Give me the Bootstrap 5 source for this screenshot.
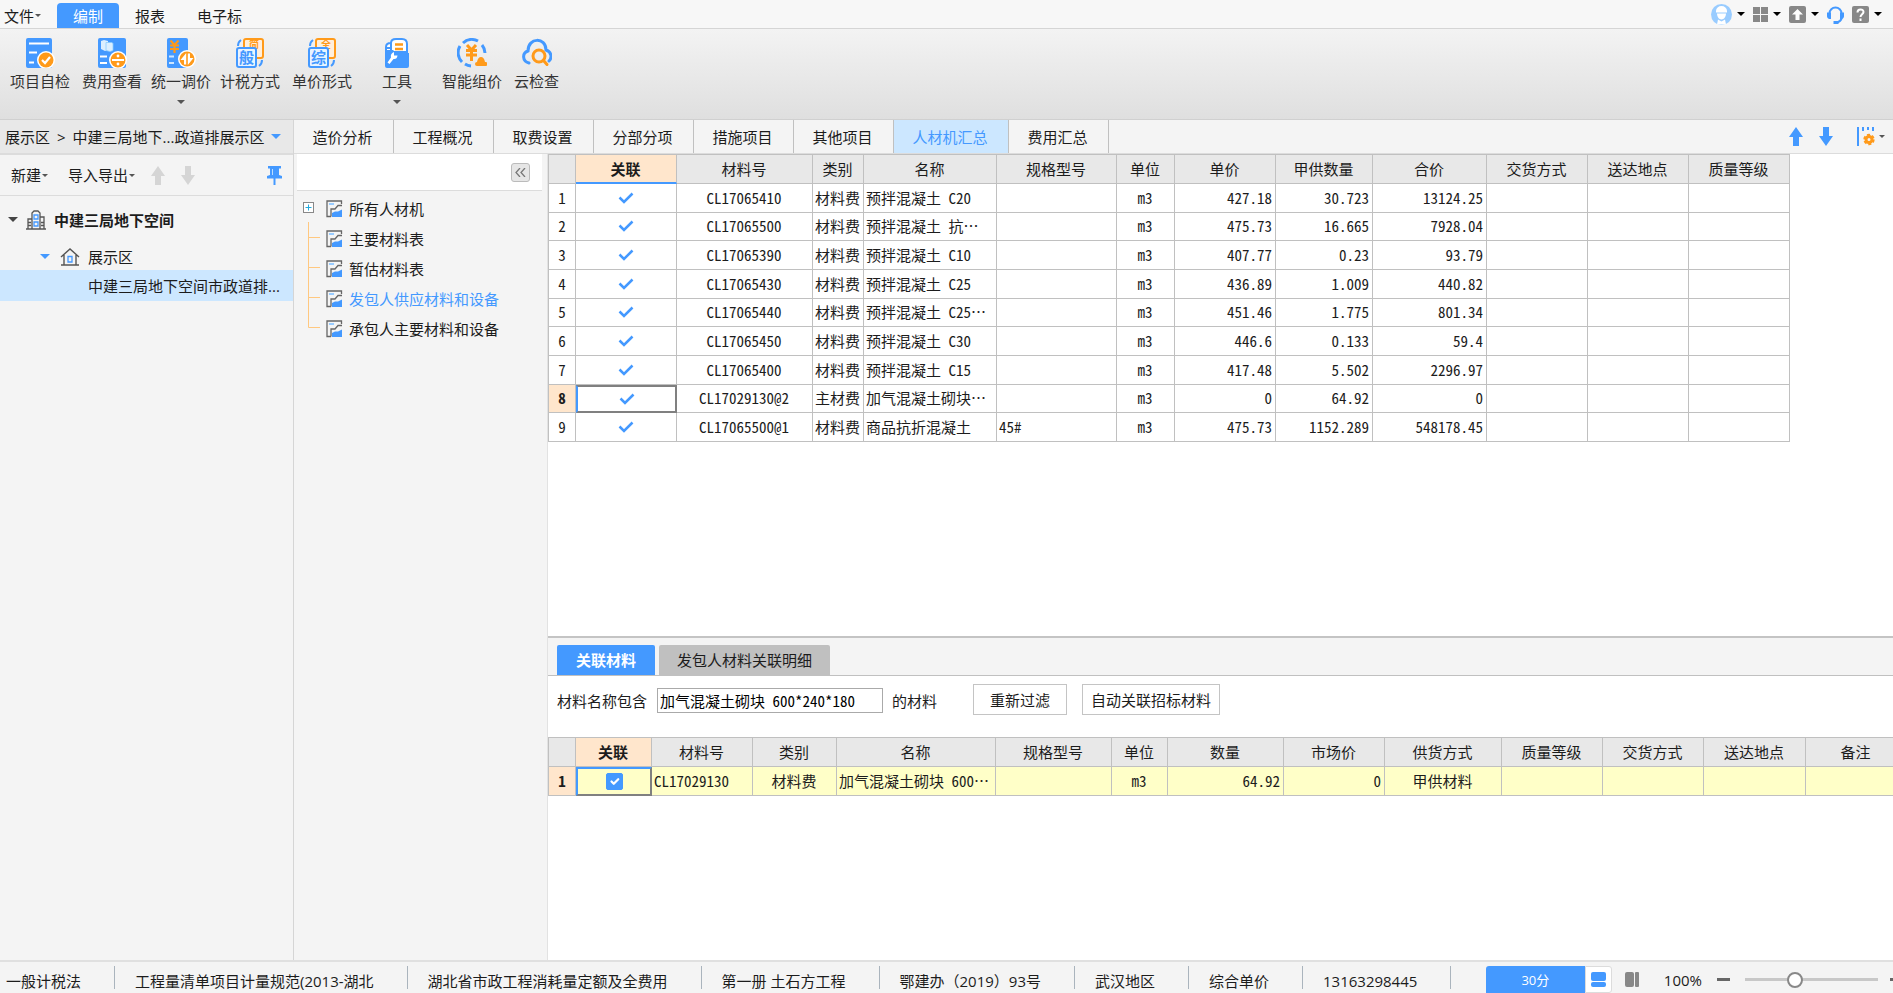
<!DOCTYPE html>
<html lang="zh-CN">
<head>
<meta charset="utf-8">
<meta name="viewport" content="width=device-width, initial-scale=1">
<title>人材机汇总</title>
<link href="https://cdn.jsdelivr.net/npm/bootstrap@5.3.0/dist/css/bootstrap.min.css" rel="stylesheet">
<style>
:root{--blue:#4499ff;--orange:#ff9a1a;--line:#c0c0c0;--soft:#dcdcdc;--pane:#f4f4f4}
body{font-family:"Open Sans","Noto Sans CJK SC",sans-serif;font-size:15px;line-height:20px;color:#1c1c1c;background:#fff}
svg{flex:none;display:block}
button,.plain{border:0;background:none;padding:0;color:inherit;text-decoration:none;white-space:nowrap}
.caret{width:0;height:0;border:4px solid transparent;border-top-color:currentColor;border-bottom:0;flex:none}
.caret-lg{border-width:5px;border-bottom:0}
.caret-sm{border-width:3px;border-bottom:0;color:#555;margin-left:1px}
.topbar{height:29px;background:#f7f7f7;border-bottom:1px solid #d5d5d5}
.menu-item{height:25px;padding:0 14px;line-height:24px}
.menu-item.active{background:var(--blue);color:#fff;border-radius:4px 4px 0 0;padding:0 16px}
.quick{gap:8px;padding-right:11px;color:#000}
.quick > span{display:flex;align-items:center;gap:5px}
.ribbon{height:91px;background:linear-gradient(#f3f3f3,#dfdfdf);padding:9px 10px 0;border-bottom:1px solid #d0d0d0;gap:9px}
.tool{display:flex;flex-direction:column;align-items:center;color:#333}
.tool + .tool-apart{margin-left:3px}
.tool + .tool-group{margin-left:21px}
.tool span{margin-top:2px;line-height:22px}
.tool .caret{margin-top:8px;color:#555}
.side{width:294px;background:var(--pane);border-right:1px solid #d5d5d5}
.crumb{height:35px;background:#e8e8e8;border-bottom:2px solid var(--soft);padding:0 12px 0 5px}
.crumb i + i,.crumb b{font-weight:400;margin:0 7px}
.side-tools{height:41px;border-bottom:1px solid var(--soft);padding:0 11px}
.node{height:31px;white-space:nowrap}
.node.picked{background:#cce7ff;padding-left:88px}
.views{height:34px;background:var(--pane);border-bottom:1px solid var(--soft)}
.view{height:33px;padding:1px 20px 0 18px;width:100px;border-right:1px solid var(--line)}
.view.active{width:115px;background:#cce7ff;color:var(--blue)}
.middle{width:254px;background:var(--pane);border-right:1px solid #e2e2e2}
.middle-head{height:37px;margin:0 5px 0 3px;background:#fff;border-bottom:1px solid var(--soft);padding:0 12px}
.fold{width:19px;height:19px;border:1px solid #bbb;border-radius:3px;background:#e6e6e6;display:grid;place-items:center}
.tree{list-style:none;margin:0;padding:3px 0 0 9px}
.tree li{height:30px;display:flex;align-items:center;gap:6px}
.branch{width:17px;height:30px}
.grid{table-layout:fixed;border-collapse:separate;border-spacing:0;border:solid var(--line);border-width:1px 0 0 1px;font-family:"Noto Sans Mono CJK SC","Noto Sans CJK SC",monospace;white-space:nowrap}
.grid th,.grid td{border:solid var(--line);border-width:0 1px 1px 0;padding:0 3px 0 2px;overflow:hidden;text-align:center;line-height:20px}
.grid th{font-weight:400;background:#e8e8e8;height:29px}
.grid tbody th{background:#fff;padding:0;height:auto}
.grid .hot,.grid tbody th.hot{background:#ffe6cc;font-weight:700}
.grid .l{text-align:left}.grid .r{text-align:right}
.grid svg{margin:auto}
.grid-main{width:1242px;height:288px}
.grid-main thead .hot{border-bottom:2px solid var(--blue)}
.grid td.focus-cell{border:2px solid #808080;border-left-color:var(--blue);padding:0}
.grid-sub{width:1359px;height:59px}
.grid-sub td{background:#ffffc8}
.grid-sub td.focus-cell{border-top-color:var(--blue)}
.grid .form-check-input{width:17px;height:17px;float:none;border-radius:2px;display:block;margin:auto}
.form-check-input:checked{background-color:var(--blue);border-color:var(--blue)}
.lower{flex:0 0 324px;border-top:2px solid #c4c4c4}
.lower-tabs{height:38px;background:var(--pane);border-bottom:1px solid var(--line);padding:0 9px}
.lower-tab{height:30px;padding:0 18px;background:#c0c0c0;border-radius:2px 2px 0 0}
.lower-tab.active{background:var(--blue);color:#fff;font-weight:600;padding:0 19px}
.filter{height:61px;padding:8px 9px 0}
.filter input{width:226px;height:25px;border:1px solid #aaa;padding:0 2px;margin:0 9px 0 10px;font-family:"Noto Sans Mono CJK SC","Noto Sans CJK SC",monospace}
.filter .act{height:31px;border:1px solid #c4c4c4;background:#fff;padding:0 8px}
.filter .act-wide{padding:0 16px;margin:0 15px 0 36px}
.status{height:33px;background:var(--pane);border-top:2px solid #e0e0e0;white-space:nowrap;overflow:hidden}
.cell{height:23px;padding:0 33px 0 20px;border-right:1px solid #aab4bd}
.cell:first-child{padding-left:6px}
.score{width:99px;height:28px;background:var(--blue);color:#fff;border-radius:3px 0 0 0;font-size:13px}
.layout-btn{width:27px;height:27px;border:1px solid var(--soft);background:#fff;border-radius:0 3px 3px 0;display:grid;place-items:center}
.zoomer{appearance:none;width:133px;height:18px;margin:0 12px 0 0;background:linear-gradient(#c8c8c8,#c8c8c8) center/100% 3px no-repeat}
.zoomer::-webkit-slider-thumb{appearance:none;width:16px;height:16px;border-radius:50%;border:2px solid #888;background:#fff}
.minus{margin:0 15px}
.cols-icon{margin-right:20px}
</style>
</head>
<body class="vh-100 d-flex flex-column overflow-hidden">
<svg width="0" height="0" class="position-absolute" aria-hidden="true">
  <symbol id="tick" viewBox="0 0 16 12"><path d="M1.500 5.500 6 10 14.500 1.500" fill="none" stroke="#49f" stroke-width="2.500"/></symbol>
  <symbol id="up" viewBox="0 0 14 19"><path d="M7 0 14 10H10V19H4V10H0Z" fill="currentColor"/></symbol>
  <symbol id="down" viewBox="0 0 14 19"><path d="M7 19 14 9H10V0H4V9H0Z" fill="currentColor"/></symbol>
  <symbol id="sheet" viewBox="0 0 17 18"><path d="M15.500 4V1H1V16.500H5M5 16.500V9H9L12 5.500H16" fill="none" stroke="#666" stroke-width="1.300"/><path d="M3 4H8" stroke="#9cf" stroke-width="2"/><path d="M6 17V13L9 11.500H12L16 9.500V17Z" fill="#49f"/></symbol>
</svg>

<nav class="topbar d-flex align-items-end justify-content-between">
  <div class="d-flex">
    <button class="menu-item px-0 ms-1 d-flex align-items-center">文件<i class="caret caret-sm"></i></button>
    <button class="menu-item active ms-3">编制</button>
    <button class="menu-item ps-3">报表</button>
    <button class="menu-item ms-1">电子标</button>
  </div>
  <div class="quick d-flex align-items-center align-self-center">
    <span><svg width="21" height="21" viewBox="0 0 21 21"><circle cx="10.500" cy="10.500" r="10.500" fill="#9cf"/><path d="M5 7a5.500 5 0 0 1 11 0v1.500H5ZM6 9.500h9c0 3-2 6-4.500 6S6 12.500 6 9.500M7 15.500l3.500 2 3.500-2 1 5h-9Z" fill="#fff"/></svg><i class="caret"></i></span>
    <span><svg width="15" height="15" viewBox="0 0 15 15"><path d="M0 0h7v7H0ZM8 0h7v7H8ZM0 8h7v7H0ZM8 8h7v7H8Z" fill="#888"/></svg><i class="caret"></i></span>
    <span><svg width="17" height="17" viewBox="0 0 17 17"><rect width="17" height="17" rx="2" fill="#888"/><path d="M8.500 3 14 8.500H10.500V14H6.500V8.500H3Z" fill="#fff"/></svg><i class="caret"></i></span>
    <svg width="17" height="19" viewBox="0 0 17 19"><path d="M2.500 8.500a6 6 0 0 1 12 0M15 12q-1 5-6 5.500" fill="none" stroke="#49f" stroke-width="2"/><path d="M0 7.500h4V14H2a3 3 0 0 1-2-3ZM17 7.500h-4V14h2a3 3 0 0 0 2-3ZM6.500 16h5v3h-5Z" fill="#49f"/></svg>
    <span><svg width="17" height="17" viewBox="0 0 17 17"><rect width="17" height="17" rx="2" fill="#888"/><path d="M5.500 6.500C5.500 2.500 11.500 2.500 11.500 6c0 2-3 2.500-3 5M8.500 12.500V15" fill="none" stroke="#fff" stroke-width="2"/></svg><i class="caret"></i></span>
  </div>
</nav>

<header class="ribbon d-flex align-items-start">
  <button class="tool"><svg width="30" height="30" viewBox="0 0 30 30"><rect x="1" width="26" height="30" rx="2" fill="#49f"/><path d="M4 5.500H24M4 14.500H12M4 24.500H9" stroke="#fff" stroke-width="2"/><circle cx="21" cy="22" r="9" fill="#fff"/><circle cx="21" cy="22" r="7.500" fill="#ff9a1a"/><path d="M17 22 20 25 25 19" fill="none" stroke="#fff" stroke-width="2.200"/></svg><span>项目自检</span></button>
  <button class="tool tool-apart"><svg width="30" height="30" viewBox="0 0 30 30"><rect x="1" width="28" height="30" rx="2" fill="#49f"/><path d="M4 3 7 2l4 1v9l-3 1-4-2Z" fill="#dcefff"/><path d="M9 4.500h6l1 1v7l-3 1-4-1Z" fill="#dcefff" stroke="#8cf" stroke-width=".8"/><path d="M3 18.500H10M3 25H10" stroke="#fff" stroke-width="2"/><circle cx="21" cy="22" r="9" fill="#fff"/><circle cx="21" cy="22" r="7.500" fill="#ff9a1a"/><path d="M15 22H27" stroke="#fff" stroke-width="2"/><circle cx="21" cy="18" r="1.400" fill="#fff"/><circle cx="21" cy="26" r="1.400" fill="#fff"/></svg><span>费用查看</span></button>
  <button class="tool"><svg width="30" height="30" viewBox="0 0 30 30"><rect x="1" width="21" height="30" rx="2" fill="#49f"/><path d="M4.500 2.500 8.500 7 12.500 2.500M4 7.500H13M4 11H13M8.500 7V15" fill="none" stroke="#ff9a1a" stroke-width="2.200"/><path d="M3 18.500H8M3 25H8" stroke="#cde6ff" stroke-width="2"/><circle cx="21" cy="21" r="9" fill="#fff"/><circle cx="21" cy="21" r="7.500" fill="#ff9a1a"/><path d="M20.200 15V26.500H18V22H14.500ZM21.800 27V15.500H24V20H27.500Z" fill="#fff"/></svg><span>统一调价</span><i class="caret"></i></button>
  <button class="tool"><svg width="30" height="30" viewBox="0 0 30 30"><rect x="9" y="1" width="19" height="19" rx="2" fill="#ffefdc" stroke="#ff9a1a" stroke-width="2"/><text x="14" y="10" font-size="10" font-weight="700" fill="#ff9a1a">简</text><rect x="2" y="10" width="19" height="19" rx="2" fill="#e8f4ff" stroke="#49f" stroke-width="2"/><text x="4" y="25" font-size="15" font-weight="700" fill="#49f">般</text><path d="M3 8Q3 4 6 2M27 22Q27 26 24 28" fill="none" stroke="#49f" stroke-width="2"/></svg><span>计税方式</span></button>
  <button class="tool tool-apart"><svg width="30" height="30" viewBox="0 0 30 30"><rect x="9" y="1" width="19" height="19" rx="2" fill="#ffefdc" stroke="#ff9a1a" stroke-width="2"/><text x="14" y="10" font-size="10" font-weight="700" fill="#ff9a1a">全</text><rect x="2" y="10" width="19" height="19" rx="2" fill="#e8f4ff" stroke="#49f" stroke-width="2"/><text x="4" y="25" font-size="15" font-weight="700" fill="#49f">综</text><path d="M3 8Q3 4 6 2M27 22Q27 26 24 28" fill="none" stroke="#49f" stroke-width="2"/></svg><span>单价形式</span></button>
  <button class="tool tool-group"><svg width="30" height="30" viewBox="0 0 30 30"><path d="M9 5Q9 1 14 1H20Q25 1 25 6V14H4V9Q4 5 9 5Z" fill="#fff" stroke="#49f" stroke-width="2"/><path d="M9 4V14M9 10H4" stroke="#49f" stroke-width="2"/><path d="M13 6.500H21M13 11H21" stroke="#ff9a1a" stroke-width="2.500"/><path d="M3 12H11L14 15H27V28a2 2 0 0 1-2 2H5a2 2 0 0 1-2-2Z" fill="#49f"/><path d="M12 14V17.500H15.500Q15 21.500 11.500 21L7.500 26 5.500 24.500 9 19.500Q8 15.500 12 14Z" fill="#fff"/></svg><span>工具</span><i class="caret"></i></button>
  <button class="tool tool-group"><svg width="30" height="30" viewBox="0 0 30 30"><path d="M5 24A13 13 0 0 1 3 8M6 5A13 13 0 0 1 21 3M25 7A13 13 0 0 1 28 15M8 26A13 13 0 0 0 14 28" fill="none" stroke="#49f" stroke-width="3"/><path d="M10 7 14.500 12 19 7M9 12.500H20M9 17H20M14.500 12V23" fill="none" stroke="#ff9a1a" stroke-width="3"/><path d="M20 28a2 2 0 0 1 0-4q1-5 4-5t4 5a2 2 0 0 1 1 4Z" fill="#ff9a1a"/></svg><span>智能组价</span></button>
  <button class="tool tool-apart"><svg width="30" height="30" viewBox="0 0 30 30"><path d="M7 25C0 23 0 15 6 13 6-1 24-1 24 12 30 14 30 20 27 23" fill="none" stroke="#49f" stroke-width="3" stroke-linecap="round"/><circle cx="17" cy="18" r="6" fill="none" stroke="#ff9a1a" stroke-width="3"/><path d="M21.500 22.500 25 26.500" stroke="#ff9a1a" stroke-width="3" stroke-linecap="round"/></svg><span>云检查</span></button>
</header>

<main class="d-flex flex-grow-1 overflow-hidden">
  <aside class="side flex-shrink-0">
    <div class="crumb d-flex align-items-center justify-content-between text-nowrap"><span>展示区<b>&gt;</b>中建三局地下...政道排展示区</span><i class="caret caret-lg" style="color:var(--blue)"></i></div>
    <div class="side-tools d-flex align-items-center">
      <button class="d-flex align-items-center">新建<i class="caret caret-sm"></i></button>
      <button class="d-flex align-items-center ms-3 ps-1">导入导出<i class="caret caret-sm"></i></button>
      <svg class="ms-3" style="color:#d5d5d5" width="14" height="19"><use href="#up"/></svg>
      <svg class="ms-3" style="color:#d5d5d5" width="14" height="19"><use href="#down"/></svg>
      <svg class="ms-auto" width="15" height="19" viewBox="0 0 15 19"><path d="M1 0H14V2.500H12V9L15 10V12.500H8.500V19H6.500V12.500H0V10L3 9V2.500H1Z" fill="#49f"/><path d="M5.500 3V9" stroke="#bdf"/></svg>
    </div>
    <div class="pt-2">
      <div class="node d-flex align-items-center ps-2 fw-bold"><i class="caret caret-lg" style="color:#444"></i>
        <svg class="ms-2" width="20" height="20" viewBox="0 0 20 20"><path d="M0 19H20M2 19V9H6M6 19V3L8 1H12L14 3V19M14 7H18V19M2 12.500H5M2 15.500H5M15 12.500H18M15 15.500H18" fill="none" stroke="#555" stroke-width="1.300"/><path d="M8 5H12V9H8ZM8 12H12V16H8Z" fill="none" stroke="#49f" stroke-width="1.300"/></svg><span class="ms-2">中建三局地下空间</span></div>
      <div class="node d-flex align-items-center pt-1 mt-1 ps-4"><i class="caret caret-lg ms-3" style="color:var(--blue)"></i>
        <svg class="ms-2 me-2" width="22" height="18" viewBox="-2 0 22 18"><path d="M1 9 10 1 19 9M4 7V17M16 7V17M1 17H19" fill="none" stroke="#555" stroke-width="1.400"/><path d="M8 8.500H12V14H8Z" fill="none" stroke="#49f" stroke-width="1.300"/></svg><span>展示区</span></div>
      <div class="node picked d-flex align-items-center">中建三局地下空间市政道排...</div>
    </div>
  </aside>

  <div class="d-flex flex-column flex-grow-1 overflow-hidden">
    <div class="views d-flex flex-shrink-0">
      <button class="view">造价分析</button><button class="view">工程概况</button><button class="view">取费设置</button><button class="view">分部分项</button><button class="view">措施项目</button><button class="view">其他项目</button><button class="view active">人材机汇总</button><button class="view">费用汇总</button>
      <div class="ms-auto d-flex align-items-center pe-1" style="color:var(--blue)">
        <svg width="14" height="19"><use href="#up"/></svg>
        <svg class="ms-3" width="14" height="19"><use href="#down"/></svg>
        <svg class="ms-4" width="18" height="19" viewBox="0 0 18 19"><path d="M1 0V19M6 0V4M11 0V3M16 0V4" stroke="#49f" stroke-width="2"/><circle cx="12" cy="12.500" r="3" fill="none" stroke="#ff9a1a" stroke-width="3"/><circle cx="12" cy="12.500" r="4.700" fill="none" stroke="#ff9a1a" stroke-width="2" stroke-dasharray="3 1.900"/></svg>
        <i class="caret caret-sm ms-1 me-1"></i>
      </div>
    </div>
    <div class="d-flex flex-grow-1 overflow-hidden">
      <section class="middle flex-shrink-0">
        <div class="middle-head d-flex align-items-center justify-content-end"><button class="fold" aria-label="收起"><svg width="11" height="9" viewBox="0 0 11 9"><path d="M5 0 1 4.500 5 9M10 0 6 4.500 10 9" fill="none" stroke="#777" stroke-width="1.300"/></svg></button></div>
        <ul class="tree">
          <li><svg class="branch" viewBox="0 0 17 30"><rect x=".5" y="8.500" width="10" height="10" fill="#fff" stroke="#888"/><path d="M2.500 13.500H8.500M5.500 10.500V16.500" stroke="#2ad"/><path d="M5.500 28V30" stroke="#ffc880"/></svg><svg width="17" height="18"><use href="#sheet"/></svg><span>所有人材机</span></li>
          <li><svg class="branch" viewBox="0 0 17 30"><path d="M5.500 0V30M5.500 13.500H17" stroke="#ffc880"/></svg><svg width="17" height="18"><use href="#sheet"/></svg><span>主要材料表</span></li>
          <li><svg class="branch" viewBox="0 0 17 30"><path d="M5.500 0V30M5.500 13.500H17" stroke="#ffc880"/></svg><svg width="17" height="18"><use href="#sheet"/></svg><span>暂估材料表</span></li>
          <li><svg class="branch" viewBox="0 0 17 30"><path d="M5.500 0V30M5.500 13.500H17" stroke="#ffc880"/></svg><svg width="17" height="18"><use href="#sheet"/></svg><span style="color:var(--blue)">发包人供应材料和设备</span></li>
          <li><svg class="branch" viewBox="0 0 17 30"><path d="M5.500 0V13.500H17" fill="none" stroke="#ffc880"/></svg><svg width="17" height="18"><use href="#sheet"/></svg><span>承包人主要材料和设备</span></li>
        </ul>
      </section>
      <section class="d-flex flex-column flex-grow-1 overflow-hidden">
        <div class="flex-grow-1 overflow-hidden">
          <table class="grid grid-main">
            <colgroup><col style="width:27px"><col style="width:101px"><col style="width:136px"><col style="width:51px"><col style="width:133px"><col style="width:120px"><col style="width:58px"><col style="width:101px"><col style="width:97px"><col style="width:114px"><col style="width:101px"><col style="width:101px"><col style="width:101px"></colgroup>
            <thead><tr><th></th><th class="hot">关联</th><th>材料号</th><th>类别</th><th>名称</th><th>规格型号</th><th>单位</th><th>单价</th><th>甲供数量</th><th>合价</th><th>交货方式</th><th>送达地点</th><th>质量等级</th></tr></thead>
            <tbody>
              <tr><th>1</th><td><svg width="16" height="12"><use href="#tick"/></svg></td><td>CL17065410</td><td>材料费</td><td class="l">预拌混凝土 C20</td><td></td><td>m3</td><td class="r">427.18</td><td class="r">30.723</td><td class="r">13124.25</td><td></td><td></td><td></td></tr>
              <tr><th>2</th><td><svg width="16" height="12"><use href="#tick"/></svg></td><td>CL17065500</td><td>材料费</td><td class="l">预拌混凝土 抗…</td><td></td><td>m3</td><td class="r">475.73</td><td class="r">16.665</td><td class="r">7928.04</td><td></td><td></td><td></td></tr>
              <tr><th>3</th><td><svg width="16" height="12"><use href="#tick"/></svg></td><td>CL17065390</td><td>材料费</td><td class="l">预拌混凝土 C10</td><td></td><td>m3</td><td class="r">407.77</td><td class="r">0.23</td><td class="r">93.79</td><td></td><td></td><td></td></tr>
              <tr><th>4</th><td><svg width="16" height="12"><use href="#tick"/></svg></td><td>CL17065430</td><td>材料费</td><td class="l">预拌混凝土 C25</td><td></td><td>m3</td><td class="r">436.89</td><td class="r">1.009</td><td class="r">440.82</td><td></td><td></td><td></td></tr>
              <tr><th>5</th><td><svg width="16" height="12"><use href="#tick"/></svg></td><td>CL17065440</td><td>材料费</td><td class="l">预拌混凝土 C25…</td><td></td><td>m3</td><td class="r">451.46</td><td class="r">1.775</td><td class="r">801.34</td><td></td><td></td><td></td></tr>
              <tr><th>6</th><td><svg width="16" height="12"><use href="#tick"/></svg></td><td>CL17065450</td><td>材料费</td><td class="l">预拌混凝土 C30</td><td></td><td>m3</td><td class="r">446.6</td><td class="r">0.133</td><td class="r">59.4</td><td></td><td></td><td></td></tr>
              <tr><th>7</th><td><svg width="16" height="12"><use href="#tick"/></svg></td><td>CL17065400</td><td>材料费</td><td class="l">预拌混凝土 C15</td><td></td><td>m3</td><td class="r">417.48</td><td class="r">5.502</td><td class="r">2296.97</td><td></td><td></td><td></td></tr>
              <tr><th class="hot">8</th><td class="focus-cell"><svg width="16" height="12"><use href="#tick"/></svg></td><td>CL17029130@2</td><td>主材费</td><td class="l">加气混凝土砌块…</td><td></td><td>m3</td><td class="r">0</td><td class="r">64.92</td><td class="r">0</td><td></td><td></td><td></td></tr>
              <tr><th>9</th><td><svg width="16" height="12"><use href="#tick"/></svg></td><td>CL17065500@1</td><td>材料费</td><td class="l">商品抗折混凝土</td><td class="l">45#</td><td>m3</td><td class="r">475.73</td><td class="r">1152.289</td><td class="r">548178.45</td><td></td><td></td><td></td></tr>
            </tbody>
          </table>
        </div>
        <div class="lower overflow-hidden">
          <div class="lower-tabs d-flex align-items-end"><button class="lower-tab active">关联材料</button><button class="lower-tab ms-1">发包人材料关联明细</button></div>
          <form class="filter d-flex align-items-start">
            <div class="d-flex align-items-center pt-1">
              <label for="kw">材料名称包含</label><input id="kw" type="text" value="加气混凝土砌块 600*240*180"><span>的材料</span></div>
            <button type="button" class="act act-wide">重新过滤</button><button type="button" class="act">自动关联招标材料</button>
          </form>
          <table class="grid grid-sub">
            <colgroup><col style="width:27px"><col style="width:76px"><col style="width:101px"><col style="width:84px"><col style="width:159px"><col style="width:116px"><col style="width:56px"><col style="width:116px"><col style="width:101px"><col style="width:117px"><col style="width:101px"><col style="width:101px"><col style="width:102px"><col style="width:101px"></colgroup>
            <thead><tr><th></th><th class="hot">关联</th><th>材料号</th><th>类别</th><th>名称</th><th>规格型号</th><th>单位</th><th>数量</th><th>市场价</th><th>供货方式</th><th>质量等级</th><th>交货方式</th><th>送达地点</th><th>备注</th></tr></thead>
            <tbody><tr><th class="hot">1</th><td class="focus-cell"><input class="form-check-input" type="checkbox" checked aria-label="关联"></td><td class="l">CL17029130</td><td>材料费</td><td class="l">加气混凝土砌块 600…</td><td></td><td>m3</td><td class="r">64.92</td><td class="r">0</td><td>甲供材料</td><td></td><td></td><td></td><td></td></tr></tbody>
          </table>
        </div>
      </section>
    </div>
  </div>
</main>

<footer class="status d-flex align-items-center justify-content-between flex-shrink-0">
  <div class="d-flex lh-lg">
    <span class="cell">一般计税法</span><span class="cell">工程量清单项目计量规范(2013-湖北</span><span class="cell">湖北省市政工程消耗量定额及全费用</span><span class="cell">第一册 土石方工程</span><span class="cell">鄂建办（2019）93号</span><span class="cell">武汉地区</span><span class="cell">综合单价</span><span class="cell">13163298445</span>
  </div>
  <div class="d-flex align-items-center pt-1">
    <button class="score">30分</button>
    <button class="layout-btn" aria-label="上下布局"><svg width="15" height="15" viewBox="0 0 15 15"><rect width="15" height="9" rx="2" fill="#49f"/><rect y="10" width="15" height="5" rx="2" fill="#49f"/></svg></button>
    <svg class="cols-icon ms-2" width="24" height="15" viewBox="-5 0 24 15"><rect width="9" height="15" rx="2" fill="#888"/><rect x="10" width="4" height="15" rx="1" fill="#888"/></svg>
    <span>100%</span>
    <svg class="minus" width="13" height="3"><rect width="13" height="3" fill="#666"/></svg>
    <input class="zoomer" type="range" min="0" max="100" value="36" aria-label="缩放">
    <svg width="3" height="3"><rect width="3" height="3" fill="#666"/></svg>
  </div>
</footer>
<script src="https://cdn.jsdelivr.net/npm/bootstrap@5.3.0/dist/js/bootstrap.bundle.min.js"></script>
</body>
</html>
